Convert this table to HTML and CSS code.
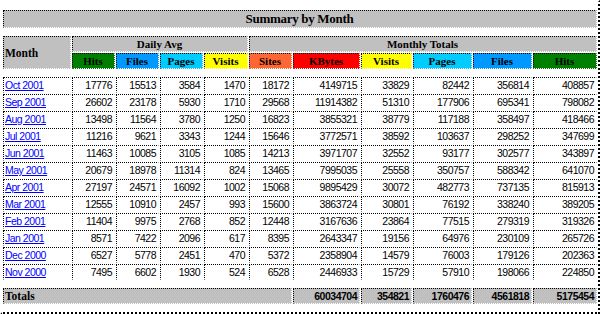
FILE: index.html
```html
<!DOCTYPE html>
<html>
<head>
<meta charset="utf-8">
<title>Summary by Month</title>
<link rel="stylesheet" href="styles.css">
</head>
<body>
<table class="summary">
  <colgroup>
    <col class="w68"><col class="w43"><col class="w43"><col class="w43"><col class="w44"><col class="w43">
    <col class="w67"><col class="w51"><col class="w59"><col class="w59"><col class="w64">
  </colgroup>
  <tr class="gap"><td colspan="11"></td></tr>
  <tr><th colspan="11" class="title">Summary by Month</th></tr>
  <tr class="gap"><td colspan="11"></td></tr>
  <tr class="head">
    <th rowspan="2" class="month-h">Month</th>
    <th colspan="4" class="grp">Daily Avg</th>
    <th colspan="6" class="grp">Monthly Totals</th>
  </tr>
  <tr class="head">
    <th class="hits">Hits</th><th class="files">Files</th><th class="pages">Pages</th><th class="visits">Visits</th>
    <th class="sites">Sites</th><th class="kbytes">KBytes</th><th class="visits">Visits</th><th class="pages">Pages</th><th class="files">Files</th><th class="hits">Hits</th>
  </tr>
  <tr class="gap"><td colspan="11"></td></tr>
  <tr class="row"><td class="m"><a href="#">Oct 2001</a></td><td>17776</td><td>15513</td><td>3584</td><td>1470</td><td>18172</td><td>4149715</td><td>33829</td><td>82442</td><td>356814</td><td>408857</td></tr>
  <tr class="row"><td class="m"><a href="#">Sep 2001</a></td><td>26602</td><td>23178</td><td>5930</td><td>1710</td><td>29568</td><td>11914382</td><td>51310</td><td>177906</td><td>695341</td><td>798082</td></tr>
  <tr class="row"><td class="m"><a href="#">Aug 2001</a></td><td>13498</td><td>11564</td><td>3780</td><td>1250</td><td>16823</td><td>3855321</td><td>38779</td><td>117188</td><td>358497</td><td>418466</td></tr>
  <tr class="row"><td class="m"><a href="#">Jul 2001</a></td><td>11216</td><td>9621</td><td>3343</td><td>1244</td><td>15646</td><td>3772571</td><td>38592</td><td>103637</td><td>298252</td><td>347699</td></tr>
  <tr class="row"><td class="m"><a href="#">Jun 2001</a></td><td>11463</td><td>10085</td><td>3105</td><td>1085</td><td>14213</td><td>3971707</td><td>32552</td><td>93177</td><td>302577</td><td>343897</td></tr>
  <tr class="row"><td class="m"><a href="#">May 2001</a></td><td>20679</td><td>18978</td><td>11314</td><td>824</td><td>13465</td><td>7995035</td><td>25558</td><td>350757</td><td>588342</td><td>641070</td></tr>
  <tr class="row"><td class="m"><a href="#">Apr 2001</a></td><td>27197</td><td>24571</td><td>16092</td><td>1002</td><td>15068</td><td>9895429</td><td>30072</td><td>482773</td><td>737135</td><td>815913</td></tr>
  <tr class="row"><td class="m"><a href="#">Mar 2001</a></td><td>12555</td><td>10910</td><td>2457</td><td>993</td><td>15600</td><td>3863724</td><td>30801</td><td>76192</td><td>338240</td><td>389205</td></tr>
  <tr class="row"><td class="m"><a href="#">Feb 2001</a></td><td>11404</td><td>9975</td><td>2768</td><td>852</td><td>12448</td><td>3167636</td><td>23864</td><td>77515</td><td>279319</td><td>319326</td></tr>
  <tr class="row"><td class="m"><a href="#">Jan 2001</a></td><td>8571</td><td>7422</td><td>2096</td><td>617</td><td>8395</td><td>2643347</td><td>19156</td><td>64976</td><td>230109</td><td>265726</td></tr>
  <tr class="row"><td class="m"><a href="#">Dec 2000</a></td><td>6527</td><td>5778</td><td>2451</td><td>470</td><td>5372</td><td>2358904</td><td>14579</td><td>76003</td><td>179126</td><td>202363</td></tr>
  <tr class="row"><td class="m"><a href="#">Nov 2000</a></td><td>7495</td><td>6602</td><td>1930</td><td>524</td><td>6528</td><td>2446933</td><td>15729</td><td>57910</td><td>198066</td><td>224850</td></tr>
  <tr class="gap"><td colspan="11"></td></tr>
  <tr class="totals">
    <th colspan="6" class="tot-label">Totals</th>
    <th>60034704</th><th>354821</th><th>1760476</th><th>4561818</th><th>5175454</th>
  </tr>
  <tr class="gap"><td colspan="11"></td></tr>
</table>
</body>
</html>
```

FILE: styles.css
```css
body {
  margin: 0;
  background: #fff;
}

.summary {
  width: 600px;
  table-layout: fixed;
  border-collapse: separate;
  border-spacing: 1px;
  border: 2px dotted #fff;
  border-right-color: #000;
  border-bottom-color: #000;
}

.w68 { width: 68px; }
.w43 { width: 43px; }
.w44 { width: 44px; }
.w67 { width: 67px; }
.w51 { width: 51px; }
.w59 { width: 59px; }
.w64 { width: 64px; }

.summary td,
.summary th {
  box-sizing: border-box;
  height: 16px;
  padding: 0 2px 0 1px;
  border: 1px dotted;
  border-color: #000 #fff #fff #000;
  font-family: "Liberation Sans", Arial, sans-serif;
  font-size: 10.5px;
  letter-spacing: -0.5px;
  line-height: 12px;
  font-weight: normal;
  text-align: right;
  white-space: nowrap;
  overflow: hidden;
  color: #000;
}

.summary .gap td {
  height: 6px;
  padding: 0;
  border: none;
}

.summary th.title {
  height: 18px;
  background: #c0c0c0;
  text-align: center;
  font-family: "Liberation Serif", serif;
  font-weight: bold;
  font-size: 13px;
  letter-spacing: -0.3px;
  line-height: 14px;
}

.summary .head th {
  background: #c0c0c0;
  text-align: center;
  font-family: "Liberation Serif", serif;
  font-weight: bold;
  font-size: 11px;
  letter-spacing: 0;
}

.summary .head th.month-h {
  text-align: left;
  vertical-align: middle;
  font-size: 11.5px;
}

.summary .head th.hits { background: #008000; }
.summary .head th.files { background: #0099ff; }
.summary .head th.pages { background: #00ccff; }
.summary .head th.visits { background: #ffff00; }
.summary .head th.sites { background: #ff6633; }
.summary .head th.kbytes { background: #ff0000; }

.summary td.m {
  text-align: left;
}

.summary td.m a {
  color: #0000ff;
  text-decoration: underline;
}

.summary .totals th {
  background: #c0c0c0;
  font-weight: bold;
}

.summary .totals th.tot-label {
  text-align: left;
  font-family: "Liberation Serif", serif;
  font-size: 11.5px;
  letter-spacing: 0;
}
```
